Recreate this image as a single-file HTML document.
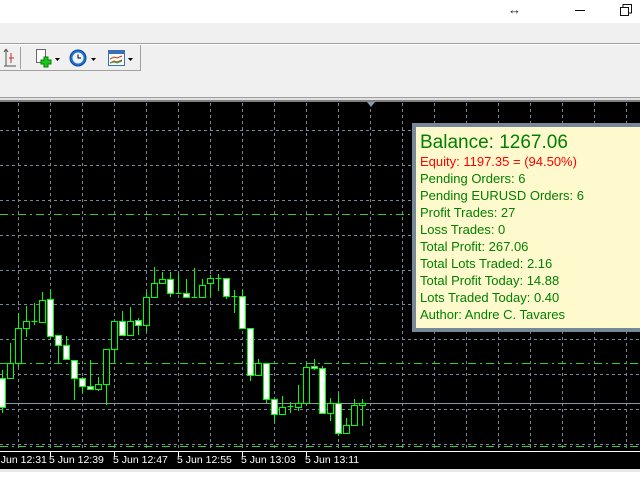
<!DOCTYPE html>
<html><head><meta charset="utf-8"><style>
body{margin:0;width:640px;height:480px;overflow:hidden;background:#fff;font-family:"Liberation Sans",sans-serif;position:relative}
.a{position:absolute}
</style></head><body>
<div class="a" style="left:0;top:0;width:640px;height:23px;background:#fff"></div>
<div class="a" style="left:508px;top:2px;font-size:13px;color:#222">&#8596;</div>
<div class="a" style="left:575px;top:10px;width:10px;height:1px;background:#111"></div>
<svg class="a" style="left:619px;top:3px" width="14" height="14"><rect x="1.5" y="4.5" width="8" height="8" fill="none" stroke="#111"/><path d="M4 4.5V1.5H12.5V10H9.5" fill="none" stroke="#111"/></svg>
<div class="a" style="left:0;top:23px;width:640px;height:77px;background:#f0f0f0"></div>
<div class="a" style="left:0;top:43px;width:640px;height:1px;background:#a0a0a0"></div>
<div class="a" style="left:0;top:44px;width:640px;height:1px;background:#fff"></div>
<div class="a" style="left:0;top:45px;width:140px;height:25px;border-right:1px solid #a0a0a0;border-bottom:1px solid #a0a0a0"></div>
<div class="a" style="left:20px;top:47px;width:1px;height:22px;background:#a0a0a0"></div>
<svg class="a" style="left:0;top:45px" width="141" height="26">
<path d="M6 4V21H15M4 21H16M6 4L4 7M6 4L8 7" fill="none" stroke="#555" stroke-width="1"/>
<path d="M11 8V18M9 13H14" stroke="#c03020" stroke-width="1"/>
<rect x="36.5" y="4.5" width="9" height="13" fill="#fff" stroke="#666"/>
<path d="M44 12h4v3h3v4h-3v3h-4v-3h-3v-4h3z" fill="#19c819" stroke="#0a7a0a"/>
<path d="M55 13h5l-2.5 3z" fill="#000"/>
<circle cx="78" cy="13" r="8" fill="#1f6fd0" stroke="#0e4a9a"/>
<circle cx="78" cy="13" r="5.5" fill="#eef4ff"/>
<path d="M78 9.5V13H81" stroke="#000" fill="none"/>
<path d="M91 13h5l-2.5 3z" fill="#000"/>
<rect x="108.5" y="5.5" width="16" height="15" fill="#f8fbff" stroke="#3a6fb5"/>
<rect x="109" y="6" width="15" height="3" fill="#3a6fb5"/>
<path d="M110 14l4-2 3 1 5-2M110 18l4-2 3 1 5-2" fill="none" stroke="#c04010"/>
<path d="M110 18l4-1 3 1 5-2" fill="none" stroke="#30a030"/>
<path d="M128 13h5l-2.5 3z" fill="#000"/>
</svg>
<div class="a" style="left:0;top:97px;width:640px;height:1px;background:#a0a0a0"></div>
<div class="a" style="left:0;top:98px;width:640px;height:2px;background:#e0e0e0"></div>
<div class="a" style="left:0;top:100px;width:640px;height:369px;background:#000"></div>
<div class="a" style="left:0;top:469px;width:640px;height:3px;background:#e8e8e8"></div>
<svg class="a" style="left:0;top:100px" width="640" height="369">
<line x1="0" y1="1" x2="640" y2="1" stroke="#fff"/>
<g stroke="#778899" stroke-width="1" stroke-dasharray="3,3">
<path d="M18.5 3V351M50.5 3V351M82.5 3V351M114.5 3V351M146.5 3V351M178.5 3V351M210.5 3V351M242.5 3V351M274.5 3V351M306.5 3V351M338.5 3V351M370.5 3V351M402.5 3V351M434.5 3V351M466.5 3V351M498.5 3V351M530.5 3V351M562.5 3V351M594.5 3V351M626.5 3V351"/>
<path d="M0 30.5H640M0 65.5H640M0 100.5H640M0 135.5H640M0 170.5H640M0 204.5H640M0 239.5H640M0 274.5H640M0 309.5H640M0 344.5H640"/>
</g>
<g stroke="#32cd32" stroke-width="1" stroke-dasharray="8,4,2,4">
<path d="M0 114.5H640M0 263.5H640M0 346.5H640"/>
</g>
<line x1="0" y1="303.5" x2="640" y2="303.5" stroke="#8899aa"/>
<path d="M367 2h8l-4 5z" fill="#8899aa"/>
<line x1="0" y1="351.5" x2="640" y2="351.5" stroke="#fff"/>
<g stroke="#00ff00" stroke-width="1" id="c"></g>
<g fill="#fff" font-size="10.5" font-family="Liberation Sans,sans-serif">
<text x="-8" y="363">5 Jun 12:31</text><text x="49" y="363">5 Jun 12:39</text><text x="113" y="363">5 Jun 12:47</text><text x="177" y="363">5 Jun 12:55</text><text x="241" y="363">5 Jun 13:03</text><text x="305" y="363">5 Jun 13:11</text>
</g>
<path d="M50.5 352v4M114.5 352v4M178.5 352v4M242.5 352v4M306.5 352v4" stroke="#fff"/>
</svg>
<div class="a" style="left:412px;top:123px;width:236px;height:201px;border:4px solid #778899;background:#fffacd;color:#008000;font-size:13px;line-height:17px;padding:0 0 0 4px;box-sizing:content-box">
<div style="font-size:19px;line-height:20px;margin-top:6px">Balance: 1267.06</div>
<div style="color:#ff0000">Equity: 1197.35 = (94.50%)</div>
<div>Pending Orders: 6</div><div>Pending EURUSD Orders: 6</div><div>Profit Trades: 27</div><div>Loss Trades: 0</div><div>Total Profit: 267.06</div><div>Total Lots Traded: 2.16</div><div>Total Profit Today: 14.88</div><div>Lots Traded Today: 0.40</div><div>Author: Andre C. Tavares</div>
</div>
<script>
var d=[[2,378,407,370,413,1],[10,363,378,343,379,0],[18,328,363,313,367,0],[26,321,328,306,337,0],[34,321,321,303,325,0],[42,300,322,292,323,0],[50,299,336,289,337,1],[58,335,345,335,364,1],[66,345,359,336,359,1],[74,360,378,360,400,1],[82,378,386,377,393,1],[90,386,389,360,389,1],[98,384,389,377,391,0],[106,349,384,349,405,0],[114,321,349,321,363,0],[122,321,335,311,335,1],[130,321,335,307,336,0],[138,320,325,318,335,1],[146,297,325,292,332,0],[154,283,297,267,297,0],[162,279,283,272,284,0],[170,279,293,272,297,1],[178,293,293,274,294,0],[186,293,297,279,297,1],[194,297,297,268,297,0],[202,285,297,279,297,0],[210,278,283,275,297,0],[218,278,278,274,291,0],[226,278,296,278,299,1],[234,296,296,290,313,0],[242,296,328,290,328,1],[250,328,375,328,381,1],[258,363,375,359,375,0],[266,363,399,363,403,1],[274,399,414,399,422,1],[282,407,414,396,414,0],[290,406,406,402,413,0],[298,403,407,385,411,0],[306,367,403,363,405,0],[314,366,368,359,370,1],[322,368,413,366,413,1],[330,403,413,398,421,0],[338,403,433,393,436,1],[346,425,433,418,434,0],[354,405,425,399,425,0],[362,403,405,399,426,0]];
var s='';d.forEach(function(c){var x=c[0]+.5,o=100;s+='<line x1="'+x+'" x2="'+x+'" y1="'+(c[3]-o)+'" y2="'+(c[4]-o)+'"/>';
if(c[2]-c[1]<1)s+='<line x1="'+(x-3)+'" x2="'+(x+3)+'" y1="'+(c[1]-o+.5)+'" y2="'+(c[1]-o+.5)+'"/>';
else s+='<rect x="'+(x-3)+'" y="'+(c[1]-o+.5)+'" width="6" height="'+(c[2]-c[1])+'" fill="'+(c[5]?'#fff':'#000')+'" stroke="#00ff00"/>';});
document.getElementById('c').innerHTML=s;
</script>
</body></html>
